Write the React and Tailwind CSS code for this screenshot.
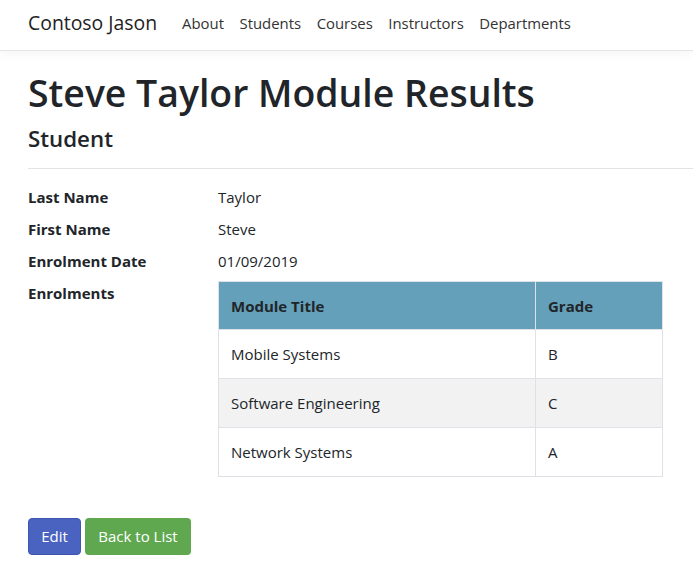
export default function App() {
  const rows = [
    { title: 'Mobile Systems', grade: 'B' },
    { title: 'Software Engineering', grade: 'C' },
    { title: 'Network Systems', grade: 'A' },
  ]
  const font = { fontFamily: '"Open Sans", "Noto Sans", sans-serif' }

  return (
    <div className="min-h-[570px] bg-white text-[#212529]" style={font}>
      <nav className="flex h-[51px] items-center border-b border-[#e5e5e5] px-[28px] pb-[4px] shadow-[0_4px_10px_rgba(0,0,0,0.04)]">
        <span className="mr-[25px] text-[19.4px] text-[#222]">Contoso Jason</span>
        <div className="flex gap-[15.5px] text-[14.9px] text-[#333]">
          <span>About</span>
          <span>Students</span>
          <span>Courses</span>
          <span>Instructors</span>
          <span>Departments</span>
        </div>
      </nav>

      <main className="pl-[28px]">
        <h1 className="mt-[18px] text-[37.4px] font-semibold leading-[48px]">Steve Taylor Module Results</h1>
        <h4 className="mt-[9px] text-[22.3px] font-semibold leading-[26px]">Student</h4>
        <hr className="mt-[16px] border-[#e3e3e3]" />

        <dl className="mt-[12px] grid grid-cols-[190px_1fr] text-[15px] leading-[32px]">
          <dt className="font-bold">Last Name</dt>
          <dd>Taylor</dd>
          <dt className="font-bold">First Name</dt>
          <dd>Steve</dd>
          <dt className="font-bold">Enrolment Date</dt>
          <dd>01/09/2019</dd>
          <dt className="font-bold">Enrolments</dt>
          <dd className="pt-[4px]">
            <table className="w-[445px] border-collapse text-[15px]">
              <thead>
                <tr className="bg-[#64a0b9]">
                  <th className="h-[48px] border border-[#dee2e6] pl-[12px] text-left font-bold">Module Title</th>
                  <th className="w-[127px] border border-[#dee2e6] pl-[12px] text-left font-bold">Grade</th>
                </tr>
              </thead>
              <tbody>
                {rows.map((r, i) => (
                  <tr key={r.title} className={i % 2 === 1 ? 'bg-[#f2f2f2]' : 'bg-white'}>
                    <td className="h-[49px] border border-[#dee2e6] pl-[12px]">{r.title}</td>
                    <td className="border border-[#dee2e6] pl-[12px]">{r.grade}</td>
                  </tr>
                ))}
              </tbody>
            </table>
          </dd>
        </dl>

        <div className="mt-[41px] flex gap-[4px] text-[15px]">
          <button className="h-[37px] w-[53px] rounded-[4px] border border-[#3f56b0] bg-[#4a62c0] text-white">Edit</button>
          <button className="h-[37px] w-[106px] rounded-[4px] bg-[#5fa84f] text-white">Back to List</button>
        </div>
      </main>
    </div>
  )
}
